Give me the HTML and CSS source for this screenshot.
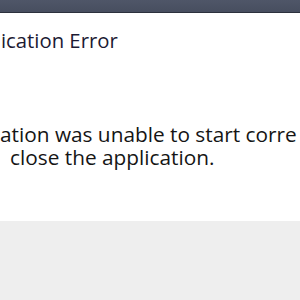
FILE: index.html
```html
<!DOCTYPE html>
<html>
<head>
<meta charset="utf-8">
<link rel="stylesheet" href="styles.css">
</head>
<body>
<div class="dialog">
  <div class="titlebar"></div>
  <div class="content">
    <div class="title">ication Error</div>
    <div class="message">
      <div class="line line1">ation was unable to start corre</div>
      <div class="line line2">close the application.</div>
    </div>
  </div>
  <div class="footer"></div>
</div>
</body>
</html>
```
FILE: styles.css
```css
html, body {
  margin: 0;
  padding: 0;
  width: 300px;
  height: 300px;
  overflow: hidden;
  background: #ffffff;
}
.dialog {
  display: flex;
  flex-direction: column;
  height: 300px;
  font-family: "Open Sans", "Noto Sans", sans-serif;
}
.titlebar {
  height: 12px;
  background: linear-gradient(#4f5668, #474e5f);
  border-bottom: 1px solid #2c313d;
  flex: none;
}
.content {
  height: 208px;
  flex: none;
  overflow: hidden;
  white-space: nowrap;
}
.title {
  margin-top: 15px;
  padding-left: 1px;
  font-size: 20.3px;
  line-height: 24px;
  color: #1c1a33;
}
.message {
  margin-top: 71px;
  font-size: 20.8px;
  line-height: 23px;
  color: #151515;
}
.line2 { padding-left: 10px; }
.footer {
  flex: 1;
  background: #eeeeee;
}
```
